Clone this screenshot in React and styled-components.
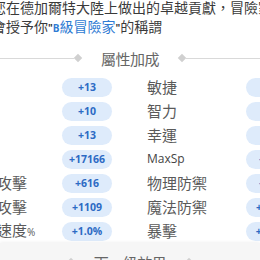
import React from 'react'
import styled, { createGlobalStyle } from 'styled-components'

const GlobalStyle = createGlobalStyle`
  html, body {
    margin: 0;
    padding: 0;
    background: #ffffff;
    overflow: hidden;
  }
  body {
    font-family: "Noto Sans CJK TC", "Noto Sans", sans-serif;
  }
`

const Page = styled.div`
  width: 260px;
  height: 260px;
  overflow: hidden;
  display: flex;
  flex-direction: column;
`

const Intro = styled.p`
  margin: -2px 0 0 -8px;
  font-size: 14px;
  line-height: 19px;
  color: #3a3a3a;
  white-space: nowrap;
  flex-shrink: 0;
`

const Quote = styled.span`
  font-family: "Open Sans", sans-serif;
  font-weight: 700;
  font-size: 10px;
  color: #333;
`

const Title = styled.span`
  color: #2f7bd3;
`

const TitleB = styled.span`
  font-family: "Open Sans", sans-serif;
  font-weight: 700;
  font-size: 10px;
`

const Heading = styled.div`
  display: flex;
  align-items: center;
  height: 20px;
  flex-shrink: 0;
  margin-top: ${(p) => p.$top || 0}px;
`

const Line = styled.div`
  flex: 1;
  height: 1px;
  background: #d9d9d9;
`

const Diamond = styled.div`
  width: 6px;
  height: 6px;
  background: #d0d0d0;
  transform: rotate(45deg);
  margin: 0 1px;
`

const HeadText = styled.span`
  font-size: 15px;
  color: #666;
  margin: 0 19px;
  letter-spacing: -0.5px;
`

const Table = styled.div`
  display: flex;
  flex-direction: column;
  flex-shrink: 0;
  margin: 7px 0 0 -33px;
  width: 360px;
`

const Row = styled.div`
  display: flex;
  align-items: center;
  gap: 35px;
  height: 24px;
`

const Cell = styled.div`
  display: flex;
  align-items: center;
  flex-shrink: 0;
`

const Label = styled.span`
  width: ${(p) => p.$w}px;
  flex-shrink: 0;
  font-size: ${(p) => (p.$latin ? 12 : 15)}px;
  font-family: ${(p) => (p.$latin ? '"Open Sans", sans-serif' : '"Noto Sans CJK TC", sans-serif')};
  color: ${(p) => (p.$latin ? '#444' : '#5a5a5a')};
  white-space: nowrap;
  line-height: 20px;
`

const Pct = styled.span`
  font-family: "Open Sans", sans-serif;
  font-size: 10px;
`

const Pill = styled.span`
  width: 50px;
  height: 19px;
  flex-shrink: 0;
  border-radius: 10px;
  background: #deebfb;
  color: #2c6ac4;
  font-family: "Open Sans", sans-serif;
  font-weight: 700;
  font-size: 10.5px;
  display: flex;
  align-items: center;
  justify-content: center;
`

const Footer = styled.div`
  flex: 1;
  background: #f6f6f6;
  box-shadow: 0 -1px 3px rgba(0, 0, 0, 0.06);
  padding-top: 9px;
`

const rows = [
  ['力量', '+13', '敏捷', '+13'],
  ['體質', '+10', '智力', '+10'],
  ['精神', '+13', '幸運', '+13'],
  ['靈巧', '+17166', 'MaxSp', '+520'],
  ['物理攻擊', '+616', '物理防禦', '+616'],
  ['魔法攻擊', '+1109', '魔法防禦', '+1109'],
  ['移動速度%', '+1.0%', '暴擊', '+1.0%'],
]

const renderLabel = (text, w) => {
  if (text === 'MaxSp') return <Label $w={w} $latin>{text}</Label>
  if (text.endsWith('%')) {
    return (
      <Label $w={w}>
        {text.slice(0, -1)}
        <Pct>%</Pct>
      </Label>
    )
  }
  return <Label $w={w}>{text}</Label>
}

const App = () => {
  return (
    <Page>
      <GlobalStyle />
      <Intro>
        您在德加爾特大陸上做出的卓越貢獻，冒險家公
        <br />
        會授予你<Quote>"</Quote>
        <Title>
          <TitleB>B</TitleB>級冒險家
        </Title>
        <Quote>"</Quote>的稱謂
      </Intro>

      <Heading $top={10}>
        <Line />
        <Diamond />
        <HeadText>屬性加成</HeadText>
        <Diamond />
        <Line />
      </Heading>

      <Table>
        {rows.map((r) => (
          <Row key={r[0]}>
            <Cell>
              {renderLabel(r[0], 95)}
              <Pill>{r[1]}</Pill>
            </Cell>
            <Cell>
              {renderLabel(r[2], 99)}
              <Pill>{r[3]}</Pill>
            </Cell>
          </Row>
        ))}
      </Table>

      <Footer>
        <Heading>
          <Line />
          <Diamond />
          <HeadText>下一級效果</HeadText>
          <Diamond />
          <Line />
        </Heading>
      </Footer>
    </Page>
  )
}

export default App
